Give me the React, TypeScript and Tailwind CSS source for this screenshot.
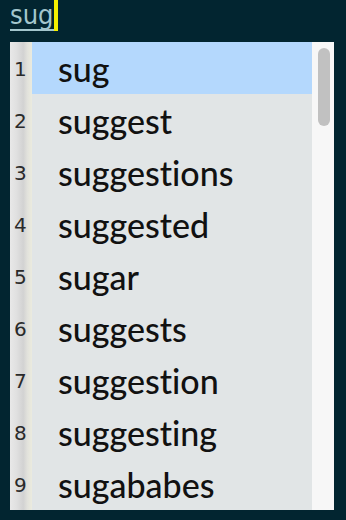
const words = [
  'sug',
  'suggest',
  'suggestions',
  'suggested',
  'sugar',
  'suggests',
  'suggestion',
  'suggesting',
  'sugababes',
]

export default function App() {
  return (
    <div className="w-[346px] h-[520px] bg-[#022530] overflow-hidden">
      {/* query */}
      <div className="h-[42px] pl-[10px] flex items-start">
        <div className="flex items-stretch h-[31px]">
          <span
            className="text-[27px] leading-[29px] text-[#a3c6cd] border-b-2 border-[#a3c6cd] h-[31px] pr-[1px]"
            style={{ fontFamily: '"DejaVu Sans Condensed", "DejaVu Sans", sans-serif' }}
          >
            sug
          </span>
          <span className="w-[4px] bg-[#f5f000]" />
        </div>
      </div>

      {/* list */}
      <div className="ml-[10px] w-[324px] h-[468px] flex">
        <div className="w-[22px] flex flex-col bg-[linear-gradient(to_right,#e8e8e8_0%,#e0e0e0_30%,#d2d2d2_60%,#e2e2dc_80%,#ebebde_100%)]">
          {words.map((_, i) => (
            <div
              key={i}
              className="h-[52px] flex items-center pl-[4px] pt-[2px] text-[20px] text-[#2a2a2a]"
              style={{ fontFamily: '"DejaVu Sans", sans-serif' }}
            >
              {i + 1}
            </div>
          ))}
        </div>
        <div className="w-[280px] flex flex-col bg-[#e1e5e6]">
          {words.map((w, i) => (
            <div
              key={w}
              className={`h-[52px] flex items-center pl-[26px] text-[34px] font-medium text-[#111] [font-variant-ligatures:none] ${i === 0 ? 'bg-[#b4d8fd]' : ''}`}
              style={{ fontFamily: 'Lato, sans-serif' }}
            >
              {w}
            </div>
          ))}
        </div>
        <div className="w-[22px] bg-[#f7f7f7] pt-[6px] pl-[6px]">
          <div className="w-[12px] h-[78px] rounded-full bg-[#c1c1c1]" />
        </div>
      </div>
    </div>
  )
}
